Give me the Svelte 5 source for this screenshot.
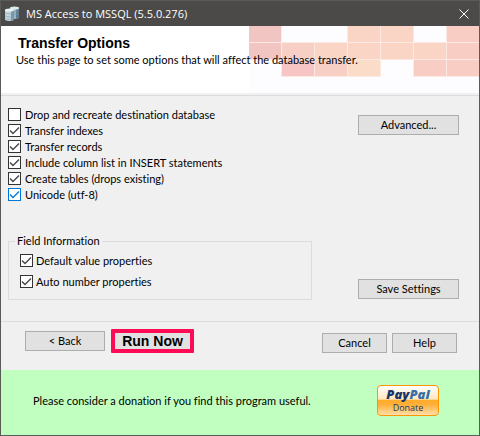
<script lang="ts">
  let options = $state([
    { id: 'drop-db', label: 'Drop and recreate destination database', checked: false },
    { id: 'indexes', label: 'Transfer indexes', checked: true },
    { id: 'records', label: 'Transfer records', checked: true },
    { id: 'columns', label: 'Include column list in INSERT statements', checked: true },
    { id: 'tables', label: 'Create tables (drops existing)', checked: true },
    { id: 'unicode', label: 'Unicode (utf-8)', checked: true, active: true }
  ]);

  let fields = $state([
    { id: 'defaults', label: 'Default value properties', checked: true },
    { id: 'auto-number', label: 'Auto number properties', checked: true }
  ]);

  // header mosaic, one entry per tile, empty string for a blank tile
  const tiles = [
    'rose', '', '', 'peach', 'peach', '', 'coral',
    'rose', 'salmon', 'peach', 'peach', 'peach', 'peach', 'coral',
    '', 'pink', 'salmon', 'cream', '', 'coral', 'coral'
  ];
</script>

{#snippet checkbox(item)}
  <div class="check" class:active={item.active}>
    <input type="checkbox" id={item.id} bind:checked={item.checked} />
    <svg class="tick" viewBox="0 0 13 13" aria-hidden="true">
      <path d="M2 6.5 L5 9.5 L11 3.5" />
    </svg>
    <label for={item.id}>{item.label}</label>
  </div>
{/snippet}

<div class="window">
  <header class="titlebar">
    <svg class="app-icon" viewBox="0 0 16 16" aria-hidden="true">
      <path d="M6 2 V12 Q10.5 14 15 12 V2 Z" fill="#9db6c4" />
      <path d="M12 2 H15 V12 L12 13 Z" fill="#5f7c8f" />
      <ellipse cx="10.5" cy="2" rx="4.5" ry="1.5" fill="#dcebf0" />
      <path d="M7 5 Q10 6 14.5 5 M7 8 Q10 9 14.5 8" stroke="#7c98a8" stroke-width="0.7" fill="none" />
      <path d="M1 4 V14 Q5 16 10 14 V4 Z" fill="#c4d6df" />
      <path d="M7 4 H10 V14 L7 15 Z" fill="#7893a5" />
      <ellipse cx="5.5" cy="4" rx="4.5" ry="1.5" fill="#e8f2f5" />
      <path d="M1 7 Q5 8.5 9 7.5 M1 10 Q5 11.5 9 10.5 M1 12.5 Q5 14 9 13" stroke="#8ba6b5" stroke-width="0.7" fill="none" />
    </svg>
    <span class="caption">MS Access to MSSQL (5.5.0.276)</span>
    <button class="close" aria-label="Close">
      <svg viewBox="0 0 10 10" aria-hidden="true">
        <path d="M0.5 0.5 L9.5 9.5 M9.5 0.5 L0.5 9.5" />
      </svg>
    </button>
  </header>

  <section class="banner">
    <div class="mosaic" aria-hidden="true">
      {#each tiles as tile}
        <span class="tile {tile}"></span>
      {/each}
    </div>
    <div class="intro">
      <h1>Transfer Options</h1>
      <p>Use this page to set some options that will affect the database transfer.</p>
    </div>
  </section>

  <main>
    <div class="settings">
      <div class="options">
        {#each options as item (item.id)}
          {@render checkbox(item)}
        {/each}
      </div>
      <fieldset>
        <legend>Field Information</legend>
        {#each fields as item (item.id)}
          {@render checkbox(item)}
        {/each}
      </fieldset>
    </div>
    <div class="side">
      <button class="btn">Advanced...</button>
      <button class="btn">Save Settings</button>
    </div>
  </main>

  <nav class="actions">
    <div class="group steps">
      <button class="btn back">&lt; Back</button>
      <button class="btn run">Run Now</button>
    </div>
    <div class="group">
      <button class="btn small">Cancel</button>
      <button class="btn small">Help</button>
    </div>
  </nav>

  <footer class="donation">
    <p>Please consider a donation if you find this program useful.</p>
    <button class="paypal">
      <span class="brand">Pay<span class="pal">Pal</span></span>
      <span class="donate">Donate</span>
    </button>
  </footer>
</div>

<style>
  :global(body) {
    margin: 0;
  }

  .window {
    box-sizing: border-box;
    border: 1px solid #5a5a58;
    background: #f0f0f0;
    color: #000;
    font-family: Lato, 'Liberation Sans', sans-serif;
    font-size: 11px;
    font-variant-ligatures: none;
    line-height: 16px;
  }

  button {
    font: inherit;
    color: inherit;
    padding: 0;
  }

  .titlebar {
    display: flex;
    align-items: center;
    height: 25px;
    padding: 0 10px 0 3px;
    background: #4c4a48;
    color: #fff;
  }

  .app-icon {
    width: 16px;
    height: 16px;
  }

  .caption {
    flex: 1;
    margin-left: 6px;
    font-family: 'Open Sans', 'Noto Sans', sans-serif;
    font-size: 11px;
  }

  .close {
    display: flex;
    border: none;
    background: none;
  }

  .close svg {
    width: 10px;
    height: 10px;
    stroke: #fff;
    stroke-width: 1;
  }

  .banner {
    display: grid;
    grid-template-columns: 1fr 230px;
    height: 67px;
    background: #fff;
    border-bottom: 2px solid #f0f0f0;
  }

  .mosaic {
    grid-area: 1 / 2;
    display: grid;
    grid-template-columns: repeat(7, 32px);
    grid-auto-rows: 16px;
    align-content: start;
    gap: 1px;
    background: #fdfcff;
    overflow: hidden;
  }

  .tile.rose,
  .tile.pink,
  .tile.coral,
  .tile.salmon,
  .tile.peach,
  .tile.cream {
    box-shadow: 0 0 0 1px #fce9e3;
  }

  .tile.rose { background: #f0c5c2; }
  .tile.pink { background: #f7c5c3; }
  .tile.coral { background: #f8cdc3; }
  .tile.salmon { background: #f7cfc4; }
  .tile.peach { background: #fad5c6; }
  .tile.cream { background: #fbdcc9; }

  .intro {
    grid-area: 1 / 1 / 2 / 3;
    padding: 8px 15px;
  }

  h1 {
    margin: 0;
    padding-left: 2px;
    font-family: 'Liberation Sans', Arial, sans-serif;
    font-size: 14px;
    line-height: 18px;
  }

  p {
    margin: 0;
  }

  main {
    display: flex;
    justify-content: space-between;
    gap: 46px;
    padding: 11px 20px 21px 7px;
    border-top: 1px solid #dcdcdc;
    border-bottom: 1px solid #dcdcdc;
  }

  .settings {
    flex: 1;
  }

  .check {
    display: flex;
    align-items: center;
    height: 16px;
    position: relative;
  }

  .check input {
    appearance: none;
    box-sizing: border-box;
    width: 13px;
    height: 13px;
    margin: 0 0 1px;
    border: 1px solid #333;
    background: #fff;
  }

  .check label {
    padding-left: 4px;
  }

  .tick {
    display: none;
    position: absolute;
    left: 0;
    width: 13px;
    height: 13px;
    margin-bottom: 1px;
    fill: none;
    stroke: #444;
    stroke-width: 1.3;
    pointer-events: none;
  }

  .check input:checked + .tick {
    display: block;
  }

  .check.active input {
    border-color: #0078d7;
  }

  .check.active .tick {
    stroke: #0078d7;
  }

  fieldset {
    display: flex;
    flex-direction: column;
    gap: 5px;
    margin: 30px 0 0;
    padding: 4px 11px 9px;
    border: 1px solid #dcdcdc;
  }

  fieldset .check label {
    padding-left: 3px;
  }

  legend {
    margin-left: -5px;
    padding: 0 2px;
  }

  .side {
    display: flex;
    flex-direction: column;
    justify-content: space-between;
    width: 101px;
    padding: 8px 0 1px;
  }

  .btn {
    box-sizing: border-box;
    height: 20px;
    border: 1px solid #adadad;
    background: #e1e1e1;
    line-height: 18px;
  }

  .actions {
    display: flex;
    align-items: flex-end;
    justify-content: space-between;
    padding: 7px 22px 17px 24px;
  }

  .group {
    display: flex;
    align-items: center;
    gap: 5px;
  }

  .steps {
    gap: 6px;
  }

  .back {
    width: 80px;
  }

  .run {
    width: 83px;
    height: 24px;
    border: 4px solid #ff0a55;
    border-radius: 1px;
    font-family: 'Liberation Sans', Arial, sans-serif;
    font-size: 14px;
    font-weight: bold;
    line-height: 16px;
  }

  .small {
    width: 65px;
  }

  .donation {
    display: flex;
    align-items: center;
    justify-content: space-between;
    height: 65px;
    padding: 0 40px 4px 32px;
    box-sizing: border-box;
    background: #c0ffc0;
  }

  .paypal {
    box-sizing: border-box;
    display: flex;
    flex-direction: column;
    align-items: center;
    width: 62px;
    height: 31px;
    border: 1px solid #ff9600;
    border-radius: 4px;
    background: linear-gradient(#fff 0, #ffe7c0 45%, #ffab2c 50%, #ffb03a 65%, #ffe0ac 100%);
    color: #1b3567;
  }

  .brand {
    font-family: 'Open Sans', sans-serif;
    font-size: 13px;
    font-style: italic;
    font-weight: 800;
    line-height: 17px;
  }

  .pal {
    color: #3470a8;
  }

  .donate {
    font-family: 'Open Sans', sans-serif;
    font-size: 9px;
    line-height: 10px;
  }
</style>
